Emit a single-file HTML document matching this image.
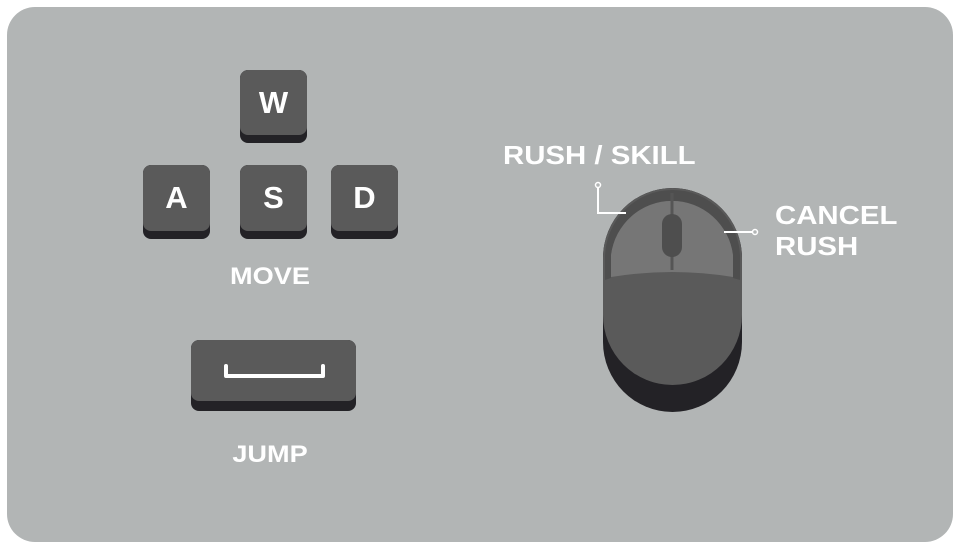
<!DOCTYPE html>
<html><head><style>
body{margin:0;width:960px;height:549px;background:#fff;position:relative;overflow:hidden;font-family:"Liberation Sans",sans-serif;}
.panel{position:absolute;left:7px;top:7px;width:946px;height:535px;background:#b2b5b5;border-radius:28px;}
.key{position:absolute;background:#232226;border-radius:8px;}
.key .f{position:absolute;left:0;right:0;top:0;bottom:8px;background:#5a5a5a;border-radius:8px;color:#fff;font-weight:bold;font-size:31px;display:flex;align-items:center;justify-content:center;}
.t{position:absolute;color:#fff;font-weight:bold;white-space:nowrap;transform:scaleX(1.13);transform-origin:left center;}
.c{transform-origin:center center;}
</style></head><body>
<div class="panel"></div>
<div class="key" style="left:240px;top:70px;width:67px;height:73px"><div class="f">W</div></div>
<div class="key" style="left:143px;top:165px;width:67px;height:74px"><div class="f">A</div></div>
<div class="key" style="left:240px;top:165px;width:67px;height:74px"><div class="f">S</div></div>
<div class="key" style="left:331px;top:165px;width:67px;height:74px"><div class="f">D</div></div>
<div class="key" style="left:191px;top:340px;width:165px;height:71px"><div class="f" style="bottom:10px"></div></div>
<svg style="position:absolute;left:0;top:0" width="960" height="549">
<path d="M226 366 V376 H323 V366" fill="none" stroke="#fff" stroke-width="4" stroke-linecap="round" stroke-linejoin="round"/>
<path d="M603 258 A69.5 70 0 0 1 742 258 V342 A69.5 70 0 0 1 603 342 Z" fill="#232226"/>
<path d="M603 258 A69.5 70 0 0 1 742 258 V315 A69.5 70 0 0 1 603 315 Z" fill="#5a5a5a"/>
<path d="M605 258 A67.5 68 0 0 1 740 258 V280 L733 278 V255 A61.5 62 0 0 0 611 255 V278 L605 280 Z" fill="#4e4e4e"/>
<path d="M611 277 V255 A61.5 62 0 0 1 733 255 V277 Q672 267 611 277 Z" fill="#767676"/>
<rect x="670.5" y="193" width="3" height="77" fill="#555"/>
<rect x="662" y="214" width="20" height="43" rx="10" fill="#4e4e4e"/>
<path d="M598 185 V213 H626" fill="none" stroke="#fff" stroke-width="2"/>
<circle cx="598" cy="185" r="2.5" fill="#b2b5b5" stroke="#fff" stroke-width="1.5"/>
<path d="M724 232 H752" fill="none" stroke="#fff" stroke-width="2"/>
<circle cx="755" cy="232" r="2.5" fill="#b2b5b5" stroke="#fff" stroke-width="1.5"/>
</svg>
<div class="t c" style="left:220px;top:263px;font-size:24px;width:100px;text-align:center">MOVE</div>
<div class="t c" style="left:220px;top:441px;font-size:24px;width:100px;text-align:center">JUMP</div>
<div class="t" style="left:503px;top:140px;font-size:26px">RUSH / SKILL</div>
<div class="t" style="left:775px;top:200px;font-size:26px;line-height:31px">CANCEL<br>RUSH</div>
</body></html>
